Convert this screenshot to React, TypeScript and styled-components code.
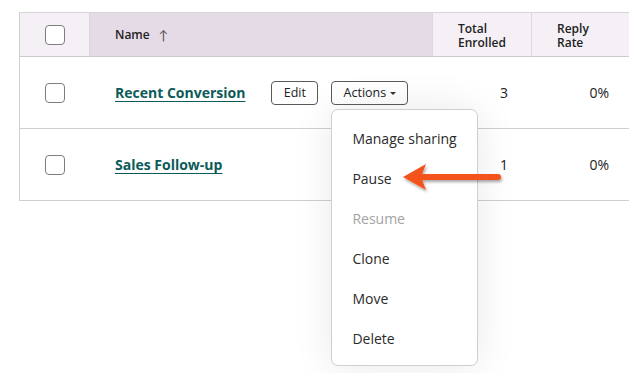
import React from "react";
import styled, { createGlobalStyle } from "styled-components";

const Global = createGlobalStyle`
  html, body { margin: 0; padding: 0; background: #fff; overflow: hidden; }
  body { font-family: "Open Sans", "Lato", sans-serif; color: #1f1f1f; }
`;

const Page = styled.div`
  width: 629px;
  height: 373px;
  padding: 12px 0 0 19px;
  box-sizing: border-box;
  overflow: hidden;
  position: relative;
`;

const Table = styled.div`
  display: grid;
  grid-template-columns: 70px 343px 99px 117px;
  width: 629px;
  border-left: 1px solid #cfcfcf;
  border-top: 1px solid #d6d6d6;
  box-sizing: border-box;
`;

const HeadCell = styled.div<{ $active?: boolean; $center?: boolean }>`
  height: 43px;
  background: ${(p) => (p.$active ? "#e5dbe7" : "#f5f0f6")};
  border-bottom: 1px solid #cbcbcb;
  border-right: 1px solid #dcd6de;
  display: flex;
  align-items: center;
  justify-content: ${(p) => (p.$center ? "center" : "flex-start")};
  padding-left: ${(p) => (p.$center ? "0" : "25px")};
  font-size: 12px;
  font-weight: 600;
  line-height: 14px;
  color: #222;
  box-sizing: content-box;
`;

const HeadText = styled.div`
  display: flex;
  flex-direction: column;
  padding-top: 2px;
`;

const Cell = styled.div<{ $center?: boolean; $right?: number }>`
  height: 71px;
  border-bottom: 1px solid #cfcfcf;
  display: flex;
  align-items: center;
  justify-content: ${(p) => (p.$center ? "center" : p.$right !== undefined ? "flex-end" : "flex-start")};
  padding-left: ${(p) => (p.$center || p.$right !== undefined ? "0" : "25px")};
  padding-right: ${(p) => (p.$right !== undefined ? `${p.$right}px` : "0")};
  font-size: 14px;
  color: #222;
  position: relative;
`;

const Check = styled.span`
  width: 18px;
  height: 18px;
  border: 1px solid #7d7d7d;
  border-radius: 4px;
  background: #fff;
  display: inline-block;
`;

const SortArrow = styled.span`
  font-size: 13px;
  color: #555;
  margin-left: 9px;
  font-weight: 400;
`;

const NameLink = styled.a`
  color: #0c5b59;
  font-weight: 700;
  font-size: 14px;
  text-decoration: underline;
  text-underline-offset: 3px;
  text-decoration-thickness: 1px;
  white-space: nowrap;
`;

const Button = styled.button<{ $w: number }>`
  width: ${(p) => p.$w}px;
  height: 24px;
  border: 1px solid #5a5a5a;
  border-radius: 4px;
  background: #fff;
  font-family: inherit;
  font-size: 12.5px;
  color: #222;
  display: inline-flex;
  align-items: center;
  justify-content: center;
  gap: 4px;
  padding: 0;
`;

const ButtonGroup = styled.div`
  display: flex;
  gap: 13px;
  margin-left: 26px;
  position: relative;
`;

const Caret = styled.span`
  width: 0;
  height: 0;
  border-left: 3px solid transparent;
  border-right: 3px solid transparent;
  border-top: 3px solid #333;
  margin-top: 1px;
`;

const ActionsWrap = styled.div`
  position: relative;
`;

const Menu = styled.div`
  position: absolute;
  top: 28px;
  left: 0;
  width: 147px;
  height: 257px;
  background: #fff;
  border: 1px solid #cfcfcf;
  border-radius: 7px;
  box-shadow: 0 0 40px rgba(0, 0, 0, 0.09);
  z-index: 5;
  display: flex;
  flex-direction: column;
  padding-top: 9px;
  box-sizing: border-box;
`;

const MenuItem = styled.div<{ $disabled?: boolean }>`
  height: 40px;
  display: flex;
  align-items: center;
  padding-left: 20px;
  font-size: 14px;
  color: ${(p) => (p.$disabled ? "#a3a3a3" : "#2b2b2b")};
  white-space: nowrap;
`;

const Pointer = styled.svg`
  position: absolute;
  left: 398px;
  top: 160px;
  z-index: 6;
  overflow: visible;
`;

export default function App() {
  return (
    <Page>
      <Global />
      <Table>
        <HeadCell $center>
          <Check />
        </HeadCell>
        <HeadCell $active>
          Name<SortArrow>↑</SortArrow>
        </HeadCell>
        <HeadCell>
          <HeadText>
            <span>Total</span>
            <span>Enrolled</span>
          </HeadText>
        </HeadCell>
        <HeadCell>
          <HeadText>
            <span>Reply</span>
            <span>Rate</span>
          </HeadText>
        </HeadCell>

        <Cell $center>
          <Check />
        </Cell>
        <Cell>
          <NameLink>Recent Conversion</NameLink>
          <ButtonGroup>
            <Button $w={47}>Edit</Button>
            <ActionsWrap>
              <Button $w={77}>
                Actions <Caret />
              </Button>
              <Menu>
                <MenuItem>Manage sharing</MenuItem>
                <MenuItem>Pause</MenuItem>
                <MenuItem $disabled>Resume</MenuItem>
                <MenuItem>Clone</MenuItem>
                <MenuItem>Move</MenuItem>
                <MenuItem>Delete</MenuItem>
              </Menu>
            </ActionsWrap>
          </ButtonGroup>
        </Cell>
        <Cell $right={24}>3</Cell>
        <Cell $right={40}>0%</Cell>

        <Cell $center>
          <Check />
        </Cell>
        <Cell>
          <NameLink>Sales Follow-up</NameLink>
        </Cell>
        <Cell $right={24}>1</Cell>
        <Cell $right={40}>0%</Cell>
      </Table>
      <Pointer width="110" height="40" viewBox="0 0 110 40">
        <defs>
          <filter id="sh" x="-20%" y="-50%" width="140%" height="200%">
            <feDropShadow dx="1" dy="2" stdDeviation="1.5" floodColor="#000" floodOpacity="0.35" />
          </filter>
        </defs>
        <g filter="url(#sh)">
          <line x1="22" y1="17" x2="100" y2="17" stroke="#f5531c" strokeWidth="6" strokeLinecap="round" />
          <path d="M5 17 L28 4 L23 17 L28 30 Z" fill="#f5531c" />
        </g>
      </Pointer>
    </Page>
  );
}
